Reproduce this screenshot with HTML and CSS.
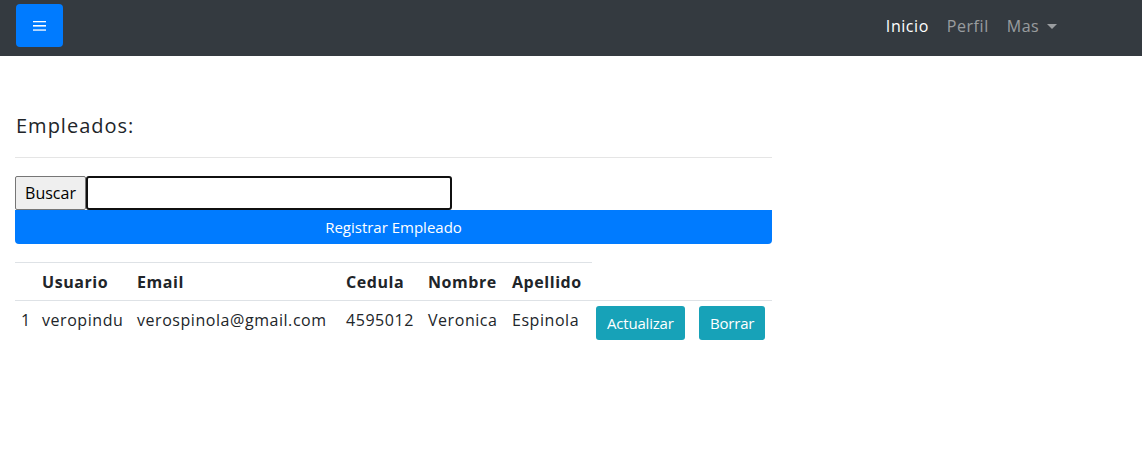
FILE: index.html
```html
<!DOCTYPE html>
<html lang="es">
<head>
<meta charset="utf-8">
<title>Empleados</title>
<link rel="stylesheet" href="styles.css">
</head>
<body>
<nav class="navbar">
  <button class="menu-btn" type="button" aria-label="Menu">
    <svg width="14" height="12" viewBox="0 0 14 12"><rect x="0" y="1" width="13" height="1.3" fill="#fff"/><rect x="0" y="5" width="13" height="1.6" fill="#fff"/><rect x="0" y="9.4" width="13" height="1.3" fill="#fff"/></svg>
  </button>
  <ul class="nav-links">
    <li><a class="nav-link active" href="#">Inicio</a></li>
    <li><a class="nav-link" href="#">Perfil</a></li>
    <li><a class="nav-link dropdown" href="#">Mas <span class="caret"></span></a></li>
  </ul>
</nav>
<main class="content">
  <h5 class="title">Empleados:</h5>
  <hr class="sep">
  <div class="search">
    <button class="search-btn" type="button">Buscar</button>
    <input class="search-input" type="text" value="">
  </div>
  <button class="register-btn" type="button">Registrar Empleado</button>
  <table class="table">
    <colgroup>
      <col class="c1"><col class="c2"><col class="c3"><col class="c4"><col class="c5"><col class="c6"><col class="c7"><col class="c8">
    </colgroup>
    <thead>
      <tr>
        <th></th><th>Usuario</th><th>Email</th><th>Cedula</th><th>Nombre</th><th>Apellido</th>
      </tr>
    </thead>
    <tbody>
      <tr>
        <td>1</td><td>veropindu</td><td>verospinola@gmail.com</td><td>4595012</td><td>Veronica</td><td>Espinola</td>
        <td class="act1"><button class="btn-info" type="button">Actualizar</button></td>
        <td class="act2"><button class="btn-info" type="button">Borrar</button></td>
      </tr>
    </tbody>
  </table>
</main>
</body>
</html>
```
FILE: styles.css
```css
* { box-sizing: border-box; }
body {
  margin: 0;
  font-family: "Segoe UI", "Open Sans", "Noto Sans", sans-serif;
  font-size: 16px;
  line-height: 1.5;
  letter-spacing: 0.55px;
  color: #212529;
  background: #fff;
}
.navbar {
  height: 56px;
  background: #343a40;
  display: flex;
  align-items: flex-start;
  justify-content: space-between;
  padding: 4px 76px 0 16px;
}
.menu-btn {
  width: 47px;
  height: 43px;
  background: #007bff;
  border: none;
  border-radius: 4px;
  display: flex;
  align-items: center;
  justify-content: center;
  padding: 0;
}
.nav-links {
  list-style: none;
  margin: 0;
  padding: 0;
  display: flex;
  height: 44px;
  align-items: center;
}
.nav-link {
  display: block;
  padding: 0 9px;
  color: rgba(255,255,255,.5);
  text-decoration: none;
  font-size: 16px;
}
.nav-link.active { color: #fff; }
.caret {
  display: inline-block;
  margin-left: 3px;
  vertical-align: 3px;
  border-top: 5px solid rgba(255,255,255,.5);
  border-left: 5px solid transparent;
  border-right: 5px solid transparent;
}
.content {
  width: 787px;
  padding: 57px 15px 0 15px;
}
.title {
  margin: 0 0 0 1px;
  font-size: 20px;
  font-weight: 500;
  line-height: 24px;
  letter-spacing: 1px;
  padding-top: 1px;
}
.sep {
  margin: 19px 0 18px 0;
  border: 0;
  border-top: 1px solid #e5e5e5;
}
.search {
  display: flex;
  height: 34px;
}
.search-btn {
  width: 71px;
  height: 34px;
  font-family: inherit;
  font-size: 16px;
  background: #efefef;
  color: #000;
  border: 1px solid #767676;
  border-radius: 2px;
  padding: 0;
}
.search-input {
  width: 366px;
  height: 34px;
  border: 2px solid #101010;
  border-radius: 3px;
  outline: none;
  font-size: 16px;
}
.register-btn {
  display: block;
  width: 100%;
  height: 34px;
  background: #007bff;
  color: #fff;
  border: none;
  border-radius: 0 0 4px 4px;
  font-family: inherit;
  font-size: 15px;
}
.table {
  margin-top: 18px;
  width: 757px;
  table-layout: fixed;
  border-collapse: collapse;
}
.c1 { width: 21px; } .c2 { width: 95px; } .c3 { width: 209px; } .c4 { width: 82px; }
.c5 { width: 84px; } .c6 { width: 86px; } .c7 { width: 100px; } .c8 { width: 80px; }
.table th, .table td {
  padding: 7px 0 7px 6px;
  text-align: left;
  vertical-align: top;
  white-space: nowrap;
  border-top: 1px solid #dee2e6;
}
.table th { font-weight: 700; padding-bottom: 6px; border-bottom: 1px solid #dee2e6; }
.table td.act1 { padding: 5px 0 5px 4px; }
.table td.act2 { padding: 5px 0 5px 7px; }
.btn-info {
  height: 34px;
  background: #17a2b8;
  color: #fff;
  border: none;
  border-radius: 3px;
  font-family: inherit;
  font-size: 15px;
  letter-spacing: -0.2px;
  padding: 0 11px;
}
```
